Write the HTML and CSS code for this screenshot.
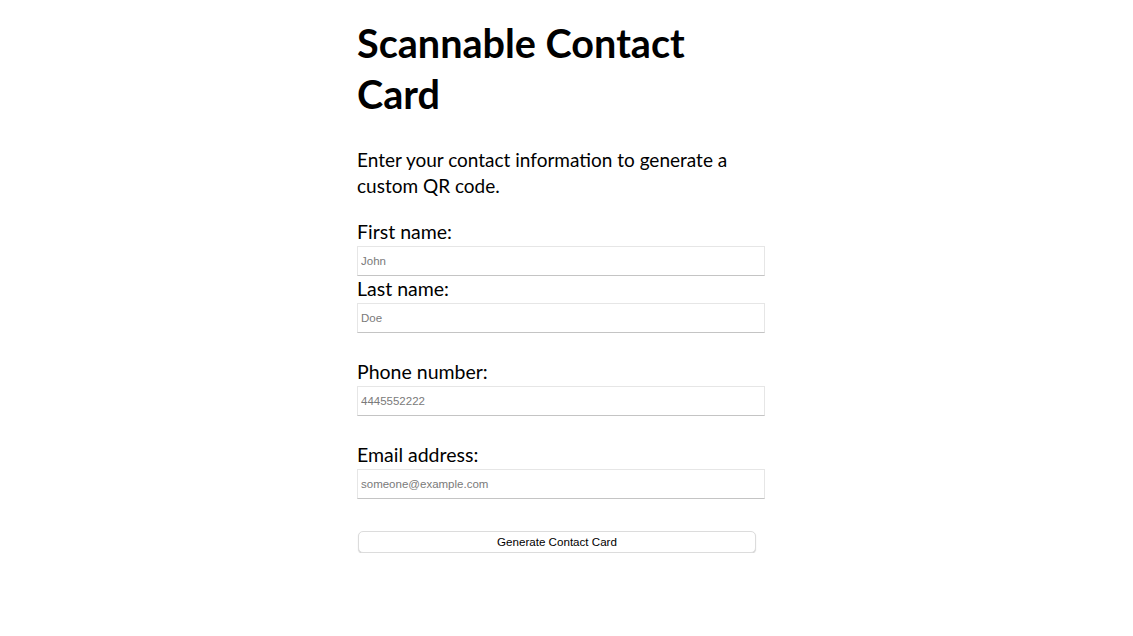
FILE: index.html
```html
<!DOCTYPE html>
<html lang="en">
<head>
<meta charset="utf-8">
<title>Scannable Contact Card</title>
<link rel="stylesheet" href="styles.css">
</head>
<body>
<main class="page">
  <h1 class="title">Scannable Contact Card</h1>
  <p class="intro">Enter your contact information to generate a custom QR code.</p>
  <form class="form">
    <div class="group">
      <label class="label" for="first">First name:</label>
      <input class="field" id="first" type="text" placeholder="John">
      <label class="label" for="last">Last name:</label>
      <input class="field" id="last" type="text" placeholder="Doe">
    </div>
    <div class="group spaced">
      <label class="label" for="phone">Phone number:</label>
      <input class="field" id="phone" type="tel" placeholder="4445552222">
    </div>
    <div class="group spaced">
      <label class="label" for="email">Email address:</label>
      <input class="field" id="email" type="email" placeholder="someone@example.com">
    </div>
    <button class="submit" type="button">Generate Contact Card</button>
  </form>
</main>
</body>
</html>
```
FILE: styles.css
```css
html, body {
  margin: 0;
  padding: 0;
  background: #ffffff;
}
body {
  font-family: Lato, "Open Sans", sans-serif;
  color: #000000;
}
.page {
  width: 408px;
  margin: 0 0 0 357px;
  padding-top: 17px;
}
.title {
  margin: 0;
  font-size: 39.6px;
  line-height: 51px;
  font-weight: 700;
  width: 340px;
}
.intro {
  margin: 28px 0 0;
  font-size: 19px;
  line-height: 26px;
}
.form {
  margin-top: 20px;
  display: flex;
  flex-direction: column;
}
.group {
  display: flex;
  flex-direction: column;
}
.group.spaced {
  margin-top: 26px;
}
.label {
  font-size: 19.5px;
  line-height: 25px;
  height: 27px;
}
.field {
  box-sizing: border-box;
  width: 408px;
  height: 30px;
  margin: 0;
  padding: 0 3px;
  border: 1px solid #e6e6e6;
  border-bottom-color: #c4c4c4;
  border-radius: 0;
  font-family: "Liberation Sans", Arial, sans-serif;
  font-size: 11.5px;
  background: #ffffff;
  outline: none;
}
.field::placeholder {
  color: #7a7a7a;
}
.submit {
  align-self: flex-start;
  margin: 32px 0 0 1px;
  width: 398px;
  height: 22px;
  padding: 0 0 2px;
  background: #ffffff;
  border: 1px solid #dcdcdc;
  border-radius: 5px;
  box-shadow: 0 1px 1px rgba(0,0,0,0.18);
  font-family: "Liberation Sans", Arial, sans-serif;
  font-size: 11.6px;
  color: #000000;
}
```
